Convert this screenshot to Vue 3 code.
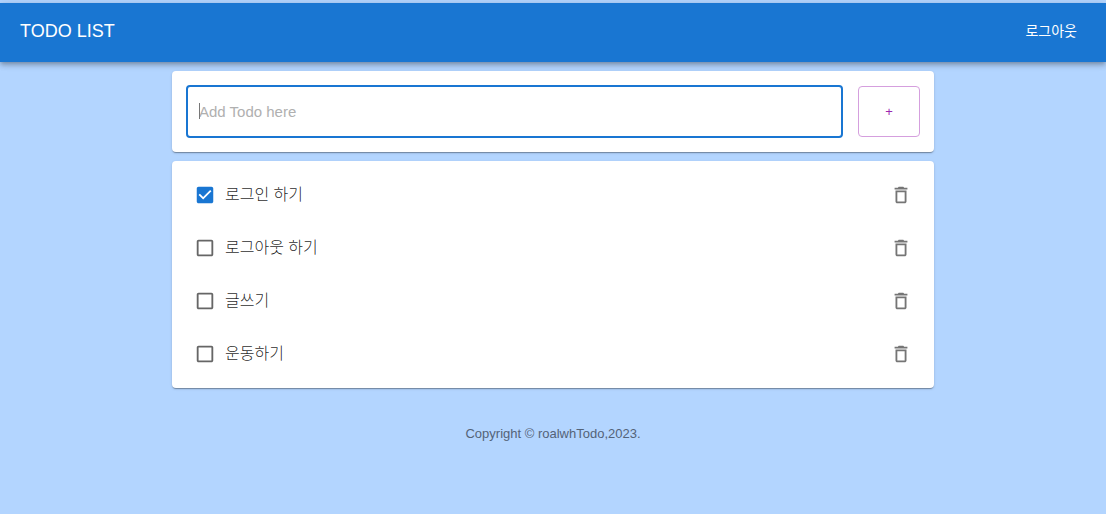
<script setup>
import { ref, onMounted } from 'vue'

const newTodo = ref('')
const todoInput = ref(null)
const focused = ref(true)

const todos = ref([
  { id: 1, title: '로그인 하기', done: true },
  { id: 2, title: '로그아웃 하기', done: false },
  { id: 3, title: '글쓰기', done: false },
  { id: 4, title: '운동하기', done: false },
])

const addTodo = () => {
  const title = newTodo.value.trim()
  if (!title) return
  todos.value.push({ id: Date.now(), title, done: false })
  newTodo.value = ''
}

const deleteTodo = (id) => {
  todos.value = todos.value.filter((todo) => todo.id !== id)
}

onMounted(() => {
  todoInput.value.focus()
})
</script>

<template>
  <div class="app">
    <header class="app-bar">
      <h1>TODO LIST</h1>
      <button type="button" class="logout">로그아웃</button>
    </header>

    <main class="container">
      <form class="card add-form" @submit.prevent="addTodo">
        <div class="field">
          <input
            ref="todoInput"
            v-model="newTodo"
            type="text"
            placeholder="Add Todo here"
            aria-label="Add Todo here"
            @focus="focused = true"
            @blur="focused = false"
          />
          <span v-if="focused && !newTodo" class="caret"></span>
        </div>
        <button type="submit" class="add-button" aria-label="Add">+</button>
      </form>

      <ul class="card todo-list">
        <li v-for="todo in todos" :key="todo.id">
          <label :for="`todo-${todo.id}`" class="check">
            <input :id="`todo-${todo.id}`" v-model="todo.done" type="checkbox" />
            <svg v-if="todo.done" class="icon checked" viewBox="0 0 24 24">
              <path d="M19 3H5c-1.11 0-2 .9-2 2v14c0 1.1.89 2 2 2h14c1.11 0 2-.9 2-2V5c0-1.1-.89-2-2-2zm-9 14l-5-5 1.41-1.41L10 14.17l7.59-7.59L19 8l-9 9z" />
            </svg>
            <svg v-else class="icon" viewBox="0 0 24 24">
              <path d="M19 5v14H5V5h14m0-2H5c-1.1 0-2 .9-2 2v14c0 1.1.9 2 2 2h14c1.1 0 2-.9 2-2V5c0-1.1-.9-2-2-2z" />
            </svg>
            <span class="title">{{ todo.title }}</span>
          </label>
          <button type="button" class="delete" aria-label="Delete" @click="deleteTodo(todo.id)">
            <svg class="icon" viewBox="0 0 24 24">
              <path d="M6 19c0 1.1.9 2 2 2h8c1.1 0 2-.9 2-2V7H6v12zM8 9h8v10H8V9zm7.5-5l-1-1h-5l-1 1H5v2h14V4z" />
            </svg>
          </button>
        </li>
      </ul>
    </main>

    <footer>Copyright © roalwhTodo,2023.</footer>
  </div>
</template>

<style>
body {
  background: #b3d5ff;
}
</style>

<style scoped>
.app {
  padding-top: 3px;
  font-family: "Liberation Sans", "Noto Sans CJK KR", sans-serif;
}

.app-bar {
  display: flex;
  justify-content: space-between;
  box-sizing: border-box;
  height: 59px;
  padding: 16px 20px;
  background: #1976d2;
  color: #fff;
  box-shadow: 0 2px 4px -1px rgba(0, 0, 0, 0.2), 0 4px 5px rgba(0, 0, 0, 0.14), 0 1px 9px rgba(0, 0, 0, 0.12);
}

h1 {
  margin: 0;
  font-size: 18px;
  font-weight: 400;
  line-height: 24px;
}

button {
  padding: 0;
  border: none;
  background: none;
  font-family: inherit;
  cursor: pointer;
}

.logout {
  height: 24px;
  padding: 0 9px;
  color: inherit;
  font-size: 14px;
  line-height: 24px;
}

.container {
  display: grid;
  gap: 9px;
  max-width: 762px;
  margin: 9px auto 0;
}

.card {
  background: #fff;
  border-radius: 4px;
  box-shadow: 0 2px 1px -1px rgba(0, 0, 0, 0.2), 0 1px 1px rgba(0, 0, 0, 0.14), 0 1px 3px rgba(0, 0, 0, 0.12);
}

.add-form {
  display: flex;
  gap: 15px;
  padding: 14px;
}

.field {
  position: relative;
  flex: 1;
}

.field input {
  display: block;
  box-sizing: border-box;
  width: 100%;
  height: 53px;
  padding: 0 11px;
  border: 1px solid #c4c4c4;
  border-radius: 4px;
  outline: none;
  color: rgba(0, 0, 0, 0.87);
  caret-color: transparent;
  font-family: inherit;
  font-size: 15px;
}

.field input:focus {
  border: 2px solid #1976d2;
}

.field input:not(:placeholder-shown) {
  caret-color: auto;
}

.field input::placeholder {
  color: #b0b0b0;
  opacity: 1;
}

.caret {
  position: absolute;
  top: 18px;
  left: 13px;
  width: 1px;
  height: 16px;
  background: #777;
}

.add-button {
  width: 62px;
  margin: 1px 0;
  border: 1px solid #d59fde;
  border-radius: 4px;
  color: #9c27b0;
  font-size: 13px;
}

.todo-list {
  margin: 0;
  padding: 7px 15px 8px;
  list-style: none;
}

.todo-list li {
  display: flex;
  align-items: center;
  justify-content: space-between;
  height: 53px;
  padding: 0 7px;
}

.check {
  display: flex;
  align-items: center;
  gap: 9px;
  cursor: pointer;
}

.check input {
  position: absolute;
  width: 22px;
  height: 22px;
  margin: 0;
  opacity: 0;
}

.icon {
  display: block;
  width: 22px;
  height: 22px;
  fill: #666;
}

.checked {
  fill: #1976d2;
}

.title {
  color: rgba(0, 0, 0, 0.87);
  font-size: 16px;
  font-weight: 300;
  line-height: 24px;
}

.delete .icon {
  fill: #757575;
}

footer {
  margin-top: 36px;
  color: #546378;
  font-size: 13px;
  line-height: 19px;
  text-align: center;
}
</style>
